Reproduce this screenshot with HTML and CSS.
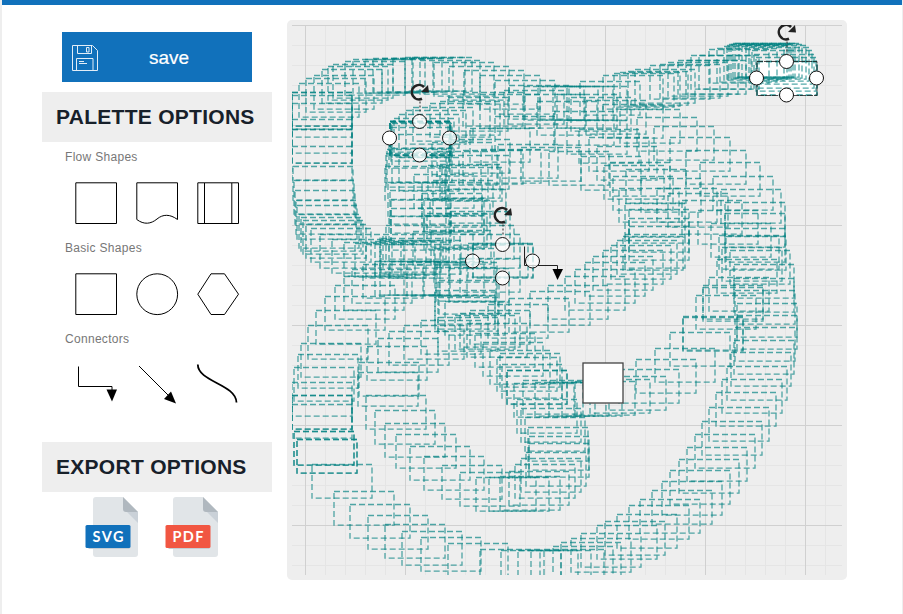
FILE: index.html
```html
<!DOCTYPE html>
<html lang="en">
<head>
<meta charset="utf-8">
<title>Diagram editor</title>
<link rel="stylesheet" href="styles.css">
</head>
<body>
<div class="page">
  <aside class="sidebar">
    <button class="save" type="button">
      <svg class="disk" width="26" height="28" viewBox="0 0 26 28"><path d="M.5 1.5H20.500L25.500 6.500V26.500H.5ZM5.500 1.500V9.500H19.500V1.500M14.500 3.500H17V8H14.500ZM4.500 26V14.500H21V26M7 17.500H12M7 19.500H15" fill="none" stroke="#e2edf7"/></svg>
      <span>save</span>
    </button>
    <h2>PALETTE OPTIONS</h2>
    <section class="group">
      <h3>Flow Shapes</h3>
      <div class="shapes">
        <svg viewBox="0 0 42 42"><path d="M.8.8H41.500V41.500H.8Z"/></svg>
        <svg viewBox="0 0 42 42"><path d="M.8.8H41.500V37.500C34 32 27 32 21 37S8 43 .8 37.500Z"/></svg>
        <svg viewBox="0 0 42 42"><path d="M.8.8H41.500V41.500H.8ZM7.500 1V41M34.800 1V41"/></svg>
      </div>
    </section>
    <section class="group">
      <h3>Basic Shapes</h3>
      <div class="shapes">
        <svg viewBox="0 0 42 42"><path d="M.8.8H41.500V41.500H.8Z"/></svg>
        <svg viewBox="0 0 42 42"><circle cx="21.200" cy="21.200" r="20.400"/></svg>
        <svg viewBox="0 0 42 42"><path d="M14 .8H27.500L41.500 21.200L27.500 41.500H14L.8 21.200Z"/></svg>
      </div>
    </section>
    <section class="group">
      <h3>Connectors</h3>
      <div class="shapes">
        <svg viewBox="0 0 42 42"><path d="M3.500 2.500V22.500H37V27"/><path class="solid" d="M31.500 25.500H42L37 37.500Z"/></svg>
        <svg viewBox="0 0 42 42"><path d="M3 2L32 31"/><path class="solid" d="M28 35L35 27.500L40 39.500Z"/></svg>
        <svg viewBox="0 0 42 42"><path class="thick" d="M.8.5C1 18 39 20 39.500 38.500"/></svg>
      </div>
    </section>
    <h2 class="export-title">EXPORT OPTIONS</h2>
    <div class="exports">
      <svg width="54" height="62" viewBox="0 0 54 62">
        <path d="M11 1H38L53 16V58a3 3 0 0 1-3 3H11a3 3 0 0 1-3-3V4a3 3 0 0 1 3-3Z" fill="#e1e5e8"/><path d="M41 15L53 27V16Z" fill="#cad1d8"/><path d="M38 1L53 16H41a3 3 0 0 1-3-3Z" fill="#b0b8bf"/>
        <path d="M3 52H45L44 53H4Z" fill="#c5ccd2"/><rect x="0.500" y="29" width="45" height="23" rx="1.500" fill="#1171bb"/><text x="23" y="46" textLength="31">SVG</text>
      </svg>
      <svg width="54" height="62" viewBox="0 0 54 62">
        <path d="M11 1H38L53 16V58a3 3 0 0 1-3 3H11a3 3 0 0 1-3-3V4a3 3 0 0 1 3-3Z" fill="#e1e5e8"/><path d="M41 15L53 27V16Z" fill="#cad1d8"/><path d="M38 1L53 16H41a3 3 0 0 1-3-3Z" fill="#b0b8bf"/>
        <path d="M3 52H45L44 53H4Z" fill="#c5ccd2"/><rect x="0.500" y="29" width="45" height="23" rx="1.500" fill="#f15642"/><text x="23" y="46" textLength="31">PDF</text>
      </svg>
    </div>
  </aside>
  <main class="board">
    <svg class="canvas" width="550" height="550" viewBox="292 25 550 550">
      <g id="grid"></g>
      <rect x="757" y="61.500" width="60" height="34" fill="#fff"/>
      <g id="trail"></g>
      <path d="M524.500 246.500V265.500H557.500V270" fill="none" stroke="#222"/><path d="M552.500 269H563L557.500 280Z"/>
      <rect x="583" y="363" width="40" height="40" fill="#fff" stroke="#444" stroke-width="1.300"/>
      <g id="selection"></g>
    </svg>
  </main>
</div>
<script src="board.js"></script>
</body>
</html>
```
FILE: styles.css
```css
* { box-sizing: border-box; }
body {
  margin: 0;
  height: 614px;
  overflow: hidden;
  background: #eee;
  font-family: "Liberation Sans", Arial, sans-serif;
}
.page {
  display: flex;
  gap: 15px;
  width: 900px;
  height: 614px;
  margin-left: 2px;
  padding: 15px 0 0 40px;
  border-top: 5px solid #1171bb;
  background: #fff;
}
.sidebar { width: 230px; padding-top: 12px; }
.save {
  display: flex;
  align-items: center;
  width: 190px;
  height: 50px;
  margin: 0 20px 10px;
  padding: 0 10px;
  border: 0;
  background: #1171bb;
  color: #fff;
  font: 19px "Liberation Sans", Arial, sans-serif;
}
.save span { flex: 1; padding: 2px 2px 0 0; text-align: center; -webkit-text-stroke: 0.2px #fff; }
.disk { margin-top: 1px; }
h2 {
  height: 50px;
  margin: 0;
  padding-left: 14px;
  background: #eee;
  color: #17202a;
  font-size: 21px;
  line-height: 49px;
  letter-spacing: 0.28px;
  white-space: nowrap;
}
.group { height: 91px; padding: 6px 0 0 23px; }
h3 {
  margin: 0;
  color: #777;
  font-size: 12px;
  font-weight: 400;
  line-height: 18px;
  letter-spacing: 0.3px;
}
.shapes { display: flex; gap: 19px; padding: 16px 0 0 10px; }
.shapes svg { width: 42px; height: 42px; fill: none; stroke: #000; stroke-width: 1; overflow: visible; }
.shapes .solid { fill: #000; stroke: none; }
.shapes .thick { stroke-width: 1.8; }
.export-title { margin-top: 27px; }
.exports { display: flex; gap: 26px; padding: 4px 0 0 43px; }
.exports text {
  fill: #fff;
  font: 700 14.5px Lato, "Open Sans", sans-serif;
  text-anchor: middle;
}
.board {
  width: 560px;
  height: 560px;
  padding: 5px;
  border-radius: 5px;
  background: #eee;
}
.canvas { display: block; }
.trace { fill: none; stroke: #008080; stroke-width: 1.3; stroke-dasharray: 6 3; opacity: 0.68; }
.minor { stroke: #e5e5e5; stroke-width: 1; }
.major { stroke: #d0d0d0; stroke-width: 1; }
.handle { fill: #fff; stroke: #111; stroke-width: 1; }
```
FILE: board.js
```js
const add = (parent, tag, attrs) => {
  const node = document.createElementNS('http://www.w3.org/2000/svg', tag);
  for (const key in attrs) node.setAttribute(key, attrs[key]);
  document.getElementById(parent).appendChild(node);
};

// Grid: minor line every 20 units, major every 100.
for (const major of [false, true]) {
  for (let i = 0; i < 28; i++) {
    if ((i % 5 === 0) !== major) continue;
    const cls = major ? 'major' : 'minor';
    const x = 305.5 + i * 20, y = 25.5 + i * 20;
    if (x < 842) add('grid', 'path', { d: `M${x} 25V575`, class: cls });
    if (y < 575) add('grid', 'path', { d: `M292 ${y}H842`, class: cls });
  }
}

// Top-left corners of the drag outlines, one list per stroke of the pointer.
const trails = [
  // lower left, round the right side and back to the middle
  `375,261 363,264 352,269 344,276 335,285 325,296 316,310 308,325 301,343 298,354 294,367 292,382
   292,395 292,404 292,395 294,431 294,431 297,439 297,439 312,464 334,491 350,504 368,515 385,524 402,531 421,537 448,543 480,549
   501,550 518,550 531,550 544,549 553,546 561,542 571,538 581,533 597,525 605,521 617,514 629,505
   640,499 652,490 662,481 670,470 679,459 687,447 695,434 702,421 709,407 716,392 722,379 727,366 731,352 734,340
   735,327 737,315 737,303 735,290 734,278 734,264 730,250 726,236 725,228 725,213 725,202 721,189 713,176 700,162
   686,150 670,137 654,126 637,117 620,109 603,104 586,100 571,97 557,94`,
  // left column and bottom-left turn
  `292,92 292,95 292,103 292,119 292,129 292,129 292,146 293,166 294,180 295,190 296,200 297,205
   299,214 301,217 303,220 306,224 311,228 320,234 332,239 344,242 355,243 366,244 375,241 381,238`,
  // arch along the top, out to the selected node
  `292,92 299,83 306,78 314,75 322,69 328,66 333,64 345,61 353,59 365,59 373,58 382,58 393,58 405,57 412,57 420,60
   434,62 449,66 464,70 480,75 495,80 509,85 524,86 538,86 553,86 567,86 580,81 603,75 614,73 620,72
   628,71 635,69 650,65 660,64 668,62 678,60 686,60 691,55 699,55 709,49 717,48 724,46 727,45 729,44 731,44
   733,43 735,43 739,43 742,44 746,45 749,47 752,50 754,54 756,57 757,61 757,61`,
  // column under the left node
  `390,121 390,121 390,121 391,122 392,123 391,127 389,134 387,149 386,153 385,166 388,182 390,190 391,199
   391,208 389,216 386,225 383,234 380,240 389,244 401,240 413,231 424,215
   424,198 422,182 428,165 437,151 450,139 470,128 495,116`,
  // from the left node to the upper right
  `390,121 394,118 399,114 406,110 413,107 430,103 440,101 448,97 463,92 480,94 504,90
   525,94 537,101 554,111 567,120 579,129 589,137 597,146 610,162 626,169 641,178
   657,188 668,193 682,200 698,210 711,223 719,235 722,247 717,259 709,277 703,285 703,287 696,295 683,316
   683,317 670,332 655,348 636,359 619,369 606,376 590,379 575,381 562,382 549,382 535,382 523,380 507,370 500,353`,
  // middle band and inner loop
  `430,200 433,180 440,164 449,155 463,150 481,149 498,144 521,147 549,151 581,156 604,165
   613,176 619,188 625,203 629,209 629,218 629,226 625,234 623,236 617,240 611,245
   603,250 593,256 585,262 575,269 565,276 548,285 530,291 509,298 488,304 470,310 455,315 438,317 421,320 404,325 389,331
   378,338 367,346 359,362 358,372 366,395 375,410 385,423 396,434 410,446 424,456 442,465 460,472 476,477
   489,477 500,476 509,471 515,464 521,458 526,452 529,443 529,436 528,427 525,417 521,408 517,399 514,383
   507,370 502,364 497,357 490,350 483,342 475,333 467,323 460,313 445,301 438,297 435,290`,
  // inner column and small node
  `392,148 399,157 414,174 422,193 427,213 431,230 434,248 437,262
   436,267 424,261 407,262 390,261 380,261`,
  `432,142 442,167 446,189 450,211 454,225 460,234 468,243
   473,243 473,244 460,258 449,268 439,280 435,295`
];

for (const trail of trails) {
  for (const point of trail.trim().split(/\s+/)) {
    const [x, y] = point.split(',').map(Number);
    add('trail', 'rect', { x, y: y + 0.5, width: 60, height: 33.7, class: 'trace' });
  }
}

// Rotation handle and four resize handles round a node.
const nodes = [[389.5, 121.5, false], [472.5, 244.5, false], [756.5, 61.5, true]];
for (const [x, y, outlined] of nodes) {
  const cx = x + 30;
  if (outlined) add('selection', 'rect', { x: x + .5, y, width: 60, height: 34, fill: 'none', stroke: '#222', 'stroke-dasharray': '6 1', 'stroke-width': 0.8 });
  add('selection', 'path', { d: `M${cx + .5} ${y - 20}V${y - 8}`, stroke: '#222', 'stroke-dasharray': '2 2' });
  add('selection', 'path', { d: `M${cx + 2.5} ${y - 22.8}A7.2 7.2 0 1 1 ${cx + 4.6} ${y - 34.5}`, fill: 'none', stroke: '#222', 'stroke-width': 2.6 });
  add('selection', 'path', { d: `M${cx + 1.5} ${y - 29.5}L${cx + 8.5} ${y - 36.5}L${cx + 9.5} ${y - 29}Z`, fill: '#222' });
  for (const [dx, dy] of [[30, 0], [0, 16.5], [60, 16.5], [30, 33.5]])
    add('selection', 'circle', { cx: x + dx, cy: y + dy, r: 7, class: 'handle', 'fill-opacity': outlined ? 1 : dx === 0 && x < 400 ? 1 : 0.75 });
}
```
